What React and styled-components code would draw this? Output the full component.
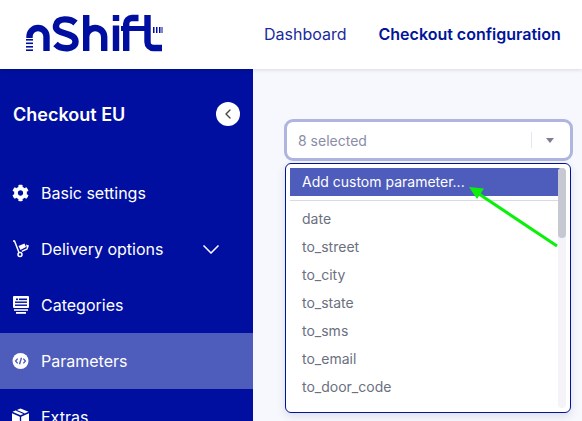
import React from 'react'
import styled, { createGlobalStyle } from 'styled-components'
import { FaCog } from 'react-icons/fa'
import { FiChevronLeft } from 'react-icons/fi'

const GlobalStyle = createGlobalStyle`
  html, body {
    margin: 0;
    height: 100%;
    overflow: hidden;
  }
  body {
    font-family: Inter, "Liberation Sans", sans-serif;
    background: #f7f8fd;
  }
  * { box-sizing: border-box; }
`

const Page = styled.div`
  width: 582px;
  height: 421px;
  display: flex;
  flex-direction: column;
  overflow: hidden;
  position: relative;
`

const Header = styled.header`
  height: 69px;
  flex-shrink: 0;
  background: #fff;
  box-shadow: 0 1px 4px rgba(0, 0, 0, 0.12);
  display: flex;
  align-items: flex-start;
  position: relative;
  z-index: 2;
`

const Logo = styled.svg`
  width: 140px;
  height: 40px;
  margin: 13px 0 0 24px;
  flex-shrink: 0;
`

const TopNav = styled.nav`
  display: flex;
  gap: 32px;
  margin-left: 100px;
  padding-top: 25px;
`

const TopLink = styled.a`
  font-size: 16px;
  line-height: 18px;
  color: ${({ $active }) => ($active ? '#00149a' : '#1a2a9c')};
  font-weight: ${({ $active }) => ($active ? 600 : 400)};
  white-space: nowrap;
`

const Body = styled.div`
  flex: 1;
  display: flex;
  min-height: 0;
`

const Sidebar = styled.aside`
  width: 253px;
  flex-shrink: 0;
  background: #000f9f;
  color: #fff;
`

const SideTitle = styled.div`
  height: 96px;
  padding: 33px 13px 0 13px;
  display: flex;
  justify-content: space-between;
  align-items: flex-start;
  font-size: 18px;
  line-height: 26px;
  font-weight: 600;
`

const Collapse = styled.button`
  width: 24px;
  height: 24px;
  margin: 0;
  padding: 0;
  border: 0;
  border-radius: 50%;
  background: #fff;
  color: #444;
  display: flex;
  align-items: center;
  justify-content: center;
  font-size: 16px;
`

const NavItem = styled.div`
  height: 56px;
  padding: 0 34px 0 12px;
  display: flex;
  align-items: center;
  gap: 12px;
  font-size: 16px;
  font-weight: 400;
  background: ${({ $active }) => ($active ? '#4e5cbb' : 'transparent')};
`

const IconSlot = styled.span`
  width: 17px;
  height: 18px;
  flex-shrink: 0;
  display: flex;
  align-items: center;
  justify-content: center;
  font-size: 18px;
`

const NavLabel = styled.span`
  flex: 1;
  white-space: nowrap;
`

const Main = styled.main`
  flex: 1;
  padding: 50px 9px 0 31px;
  position: relative;
`

const SelectBox = styled.div`
  height: 42px;
  width: 289px;
  background: #fff;
  border: 3px solid #b0b5e0;
  border-radius: 9px;
  display: flex;
  align-items: center;
  padding: 0 16px 0 11px;
  font-size: 14px;
  color: #8a8ca8;
`

const SelectText = styled.span`
  flex: 1;
`

const Divider = styled.span`
  width: 1px;
  height: 16px;
  background: #e4e5ee;
  margin-right: 14px;
`

const SelectCaret = styled.span`
  width: 0;
  height: 0;
  border-left: 4px solid transparent;
  border-right: 4px solid transparent;
  border-top: 5px solid #7c7f92;
`

const Menu = styled.div`
  position: absolute;
  top: 94px;
  left: 32px;
  width: 286px;
  height: 250px;
  background: #fff;
  border: 1px solid #00149a;
  border-radius: 6px;
  box-shadow: 0 3px 8px rgba(40, 50, 120, 0.14);
  padding: 4px 0 0 4px;
  overflow: hidden;
`

const MenuAdd = styled.div`
  height: 28px;
  width: 274px;
  background: #4e5cbb;
  color: #fff;
  font-size: 14px;
  line-height: 28px;
  padding-left: 12px;
`

const MenuRule = styled.div`
  width: 270px;
  height: 1px;
  margin: 4px 0 4px;
  background: #d7d9e6;
`

const MenuItem = styled.div`
  height: 28px;
  line-height: 28px;
  padding-left: 12px;
  font-size: 14px;
  color: #6b7080;
`

const ScrollTrack = styled.div`
  position: absolute;
  top: 4px;
  right: 4px;
  width: 8px;
  height: 240px;
  background: #f4f4f8;
  border-radius: 4px;
`

const ScrollThumb = styled.div`
  width: 8px;
  height: 70px;
  background: #c6c8d2;
  border-radius: 4px;
`

const Arrow = styled.svg`
  position: absolute;
  left: 0;
  top: 0;
  width: 582px;
  height: 421px;
  pointer-events: none;
  z-index: 3;
`

const ExpandIcon = () => (
  <svg width="16" height="9" viewBox="0 0 16 9" fill="none" stroke="#fff" strokeWidth="1.5">
    <path d="M.5.500 8 8 15.500.500" />
  </svg>
)

const DollyIcon = () => (
  <svg width="17" height="18" viewBox="0 0 17 18">
    <path d="M1 1h1.500L7 12.500" fill="none" stroke="#fff" strokeWidth="1.500" />
    <circle cx="8" cy="14.500" r="2" fill="none" stroke="#fff" strokeWidth="1.500" />
    <path d="M6.500 6 12.500 3.500 14 7 8.500 10z" fill="#fff" />
    <path d="M14 4.500 17 5.500 15.500 9.500 10 12 9.500 10.800 14.800 8.200z" fill="#fff" />
  </svg>
)

const CategoriesIcon = () => (
  <svg width="16" height="18" viewBox="0 0 16 18" fill="#fff">
    <path d="M1 0h14a1 1 0 0 1 1 1v10a1 1 0 0 1-1 1H1a1 1 0 0 1-1-1V1a1 1 0 0 1 1-1z" />
    <rect x="3" y="2.500" width="2" height="1.600" fill="#000f9f" />
    <rect x="6" y="2.500" width="8" height="1.600" fill="#000f9f" />
    <rect x="2" y="5.500" width="12" height="1.400" fill="#000f9f" />
    <rect x="2" y="8.500" width="12" height="1.400" fill="#000f9f" />
    <rect x="1" y="13.200" width="14" height="1.600" />
    <rect x="3" y="16" width="10" height="1.800" />
  </svg>
)

const CodeIcon = () => (
  <svg width="18" height="18" viewBox="0 0 18 18">
    <circle cx="9" cy="9" r="8.500" fill="#fff" />
    <path d="M6 6.500 3.800 9 6 11.500M12 6.500 14.200 9 12 11.500M10 5.500 8 12.500" fill="none" stroke="#4e5cbb" strokeWidth="1.500" />
  </svg>
)

const BoxIcon = () => (
  <svg width="18" height="18" viewBox="0 0 18 18" fill="#fff">
    <path d="M9 0 17.500 3.500 9 7.200 .5 3.500z" />
    <path d="M0 5 8.300 8.700V18L0 14.300z" />
    <path d="M18 5 9.700 8.700V18L18 14.300z" />
    <path d="M4.500 1.800 13 5.500" stroke="#000f9f" strokeWidth="1.200" />
  </svg>
)

const NLogo = () => (
  <Logo viewBox="24 13 140 40">
    <g fill="none" stroke="#000f9f" strokeWidth="6.400">
      <path d="M29.500 38V36.500a8.500 8.500 0 0 1 17 0V51" />
      <path d="M75.500 23c-5-4.500-18-6-19.500 2.500-1.500 10 19.500 6 19.500 16 0 8.500-14 8.500-20 2.500" />
      <path d="M86.200 15V51M86.200 37a8.500 8.500 0 0 1 18 0V51" />
      <path d="M116 15V21M116 25.500V51" />
      <path d="M138.500 18h-6.500a5.800 5.800 0 0 0-5.800 5.800V51" />
      <path d="M147.500 15V42a6 6 0 0 0 6 6h8.500" />
    </g>
    <g fill="#000f9f">
      <rect x="121" y="26" width="26" height="5" />
      <rect x="26" y="39" width="7" height="1.600" />
      <rect x="26" y="42.500" width="7" height="1.600" />
      <rect x="26" y="46" width="7" height="1.600" />
      <rect x="26" y="49.400" width="7" height="1.600" />
      <rect x="153" y="27" width="1.500" height="6" />
      <rect x="156" y="27" width="1.500" height="6" />
      <rect x="159" y="27" width="1.500" height="6" />
      <rect x="161.500" y="27" width="1" height="6" />
    </g>
  </Logo>
)

const params = ['date', 'to_street', 'to_city', 'to_state', 'to_sms', 'to_email', 'to_door_code']

export default function App() {
  return (
    <Page>
      <GlobalStyle />
      <Header>
        <NLogo />
        <TopNav>
          <TopLink>Dashboard</TopLink>
          <TopLink $active>Checkout configuration</TopLink>
        </TopNav>
      </Header>
      <Body>
        <Sidebar>
          <SideTitle>
            Checkout EU
            <Collapse><FiChevronLeft /></Collapse>
          </SideTitle>
          <NavItem>
            <IconSlot><FaCog /></IconSlot>
            <NavLabel>Basic settings</NavLabel>
          </NavItem>
          <NavItem>
            <IconSlot><DollyIcon /></IconSlot>
            <NavLabel>Delivery options</NavLabel>
            <ExpandIcon />
          </NavItem>
          <NavItem>
            <IconSlot><CategoriesIcon /></IconSlot>
            <NavLabel>Categories</NavLabel>
          </NavItem>
          <NavItem $active>
            <IconSlot><CodeIcon /></IconSlot>
            <NavLabel>Parameters</NavLabel>
          </NavItem>
          <NavItem>
            <IconSlot><BoxIcon /></IconSlot>
            <NavLabel>Extras</NavLabel>
          </NavItem>
        </Sidebar>
        <Main>
          <SelectBox>
            <SelectText>8 selected</SelectText>
            <Divider />
            <SelectCaret />
          </SelectBox>
          <Menu>
            <MenuAdd>Add custom parameter...</MenuAdd>
            <MenuRule />
            {params.map((p) => (
              <MenuItem key={p}>{p}</MenuItem>
            ))}
            <ScrollTrack><ScrollThumb /></ScrollTrack>
          </Menu>
        </Main>
      </Body>
      <Arrow viewBox="0 0 582 421">
        <path d="M557 246 476 192" stroke="#0bf00b" strokeWidth="3" fill="none" />
        <path d="M469 187 484 188.500 477 199z" fill="#0bf00b" />
      </Arrow>
    </Page>
  )
}
